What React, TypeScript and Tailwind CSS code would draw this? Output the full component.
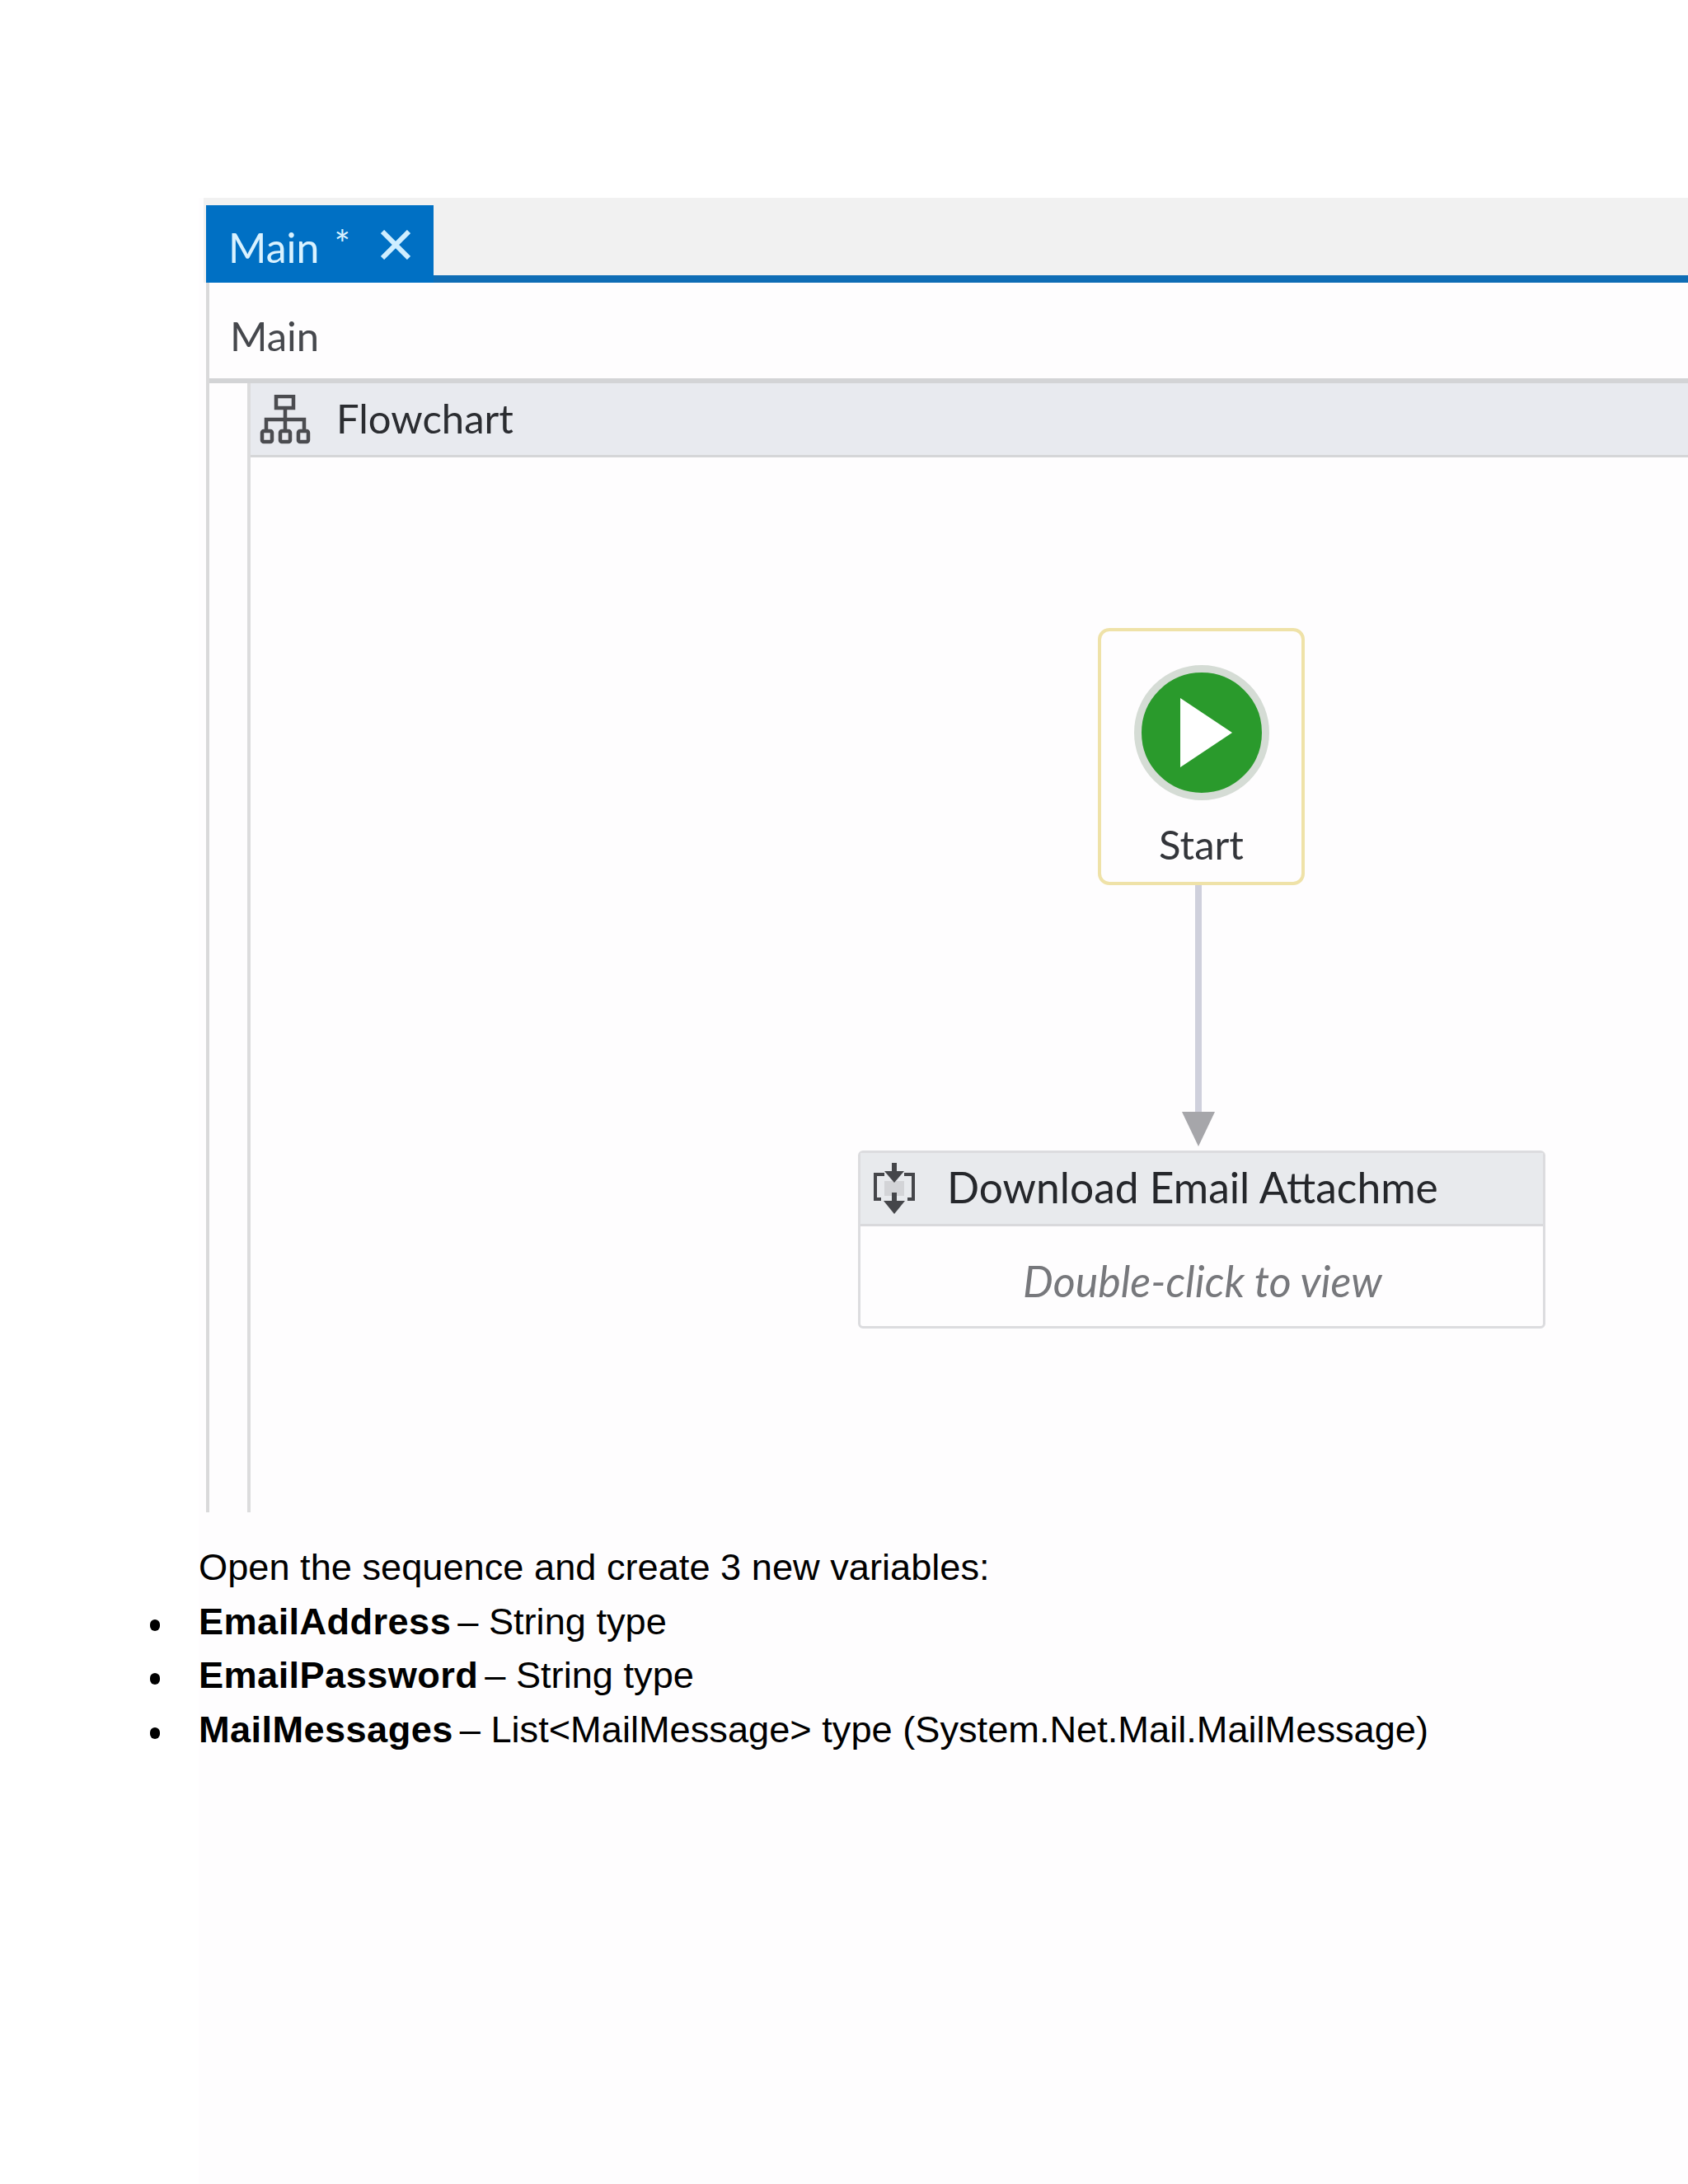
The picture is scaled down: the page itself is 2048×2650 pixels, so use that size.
export default function App() {
  const ui = { fontFamily: 'Lato, "Open Sans", sans-serif' };
  const doc = { fontFamily: '"Liberation Sans", Arial, sans-serif' };
  return (
    <div className="w-[2048px] h-[2650px] overflow-hidden bg-white pt-[240px] pl-[241px]">
      <div className="h-[2410px] bg-[#fefdfe]">
        <div className="w-[1807px] pl-[6px]" style={ui}>
          <div className="h-[103px] bg-[#f1f1f1] pl-[3px] flex flex-col justify-end">
            <div className="h-[94px] flex items-start border-b-[9px] border-[#0f6db5]">
              <div className="w-[276px] h-[94px] shrink-0 bg-[#0070c4] text-[#d9f2ff] text-[50px] leading-none flex items-start pl-[27px] pt-[26px] relative">
                <span>Main</span>
                <span className="text-[46px] ml-[18px] mt-[-2px]">*</span>
                <svg className="absolute left-[212px] top-[30px] w-[36px] h-[36px]" viewBox="0 0 36 36" fill="none" stroke="#cfeeff" strokeWidth="6">
                  <path d="M2 2 L34 34 M34 2 L2 34" />
                </svg>
              </div>
            </div>
          </div>
          <div className="h-[1492px] ml-[3px] border-l-[4px] border-[#d9d9da] flex flex-col">
            <div className="h-[122px] border-b-[6px] border-[#d3d4d6] pl-[25px] pt-[35px] text-[49px] leading-[58px] text-[#46484d]">Main</div>
            <div className="ml-[46px] flex-1 border-l-[4px] border-[#dcdcdd] flex flex-col">
              <div className="h-[90px] bg-[#e8eaef] border-b-[3px] border-[#d5d6d8] flex items-center pl-[11px] text-[49px] text-[#2b2d31]">
                <svg className="w-[62px] h-[60px] shrink-0" viewBox="0 0 62 60" fill="none" stroke="#4b4c50" strokeWidth="4.5">
                  <rect x="20" y="2" width="21" height="14" />
                  <path d="M31 16 V44 M8 44 V30 H54 V44" />
                  <rect x="3" y="44" width="12" height="13" rx="2" />
                  <rect x="25" y="44" width="12" height="13" rx="2" />
                  <rect x="47" y="44" width="12" height="13" rx="2" />
                </svg>
                <span className="ml-[31px] -mt-[2px]">Flowchart</span>
              </div>
              <div className="relative flex-1">
                <div className="absolute left-[1028px] top-[207px] w-[251px] h-[312px] rounded-[14px] border-[4px] border-[#efe2a8] flex flex-col items-center">
                  <div className="w-[164px] h-[164px] mt-[41px] rounded-full bg-[#2a9a2c] border-[9px] border-[#d5dcd5] flex items-center justify-center">
                    <svg className="w-[63px] h-[84px] ml-[12px]" viewBox="0 0 63 84"><path d="M0 0 L63 42 L0 84 Z" fill="#ffffff" /></svg>
                  </div>
                  <span className="mt-[23px] text-[49px] leading-[60px] text-[#33353a]">Start</span>
                </div>
                <div className="absolute left-[1146px] top-[519px] w-[8px] h-[280px] bg-[#cfd0dc]" />
                <svg className="absolute left-[1130px] top-[794px] w-[40px] h-[42px]" viewBox="0 0 40 42"><path d="M0 0 H40 L20 42 Z" fill="#a6a6aa" /></svg>
                <div className="absolute left-[737px] top-[841px] w-[834px] h-[216px] rounded-[6px] border-[3px] border-[#dcdcdf] flex flex-col">
                  <div className="h-[89px] bg-[#e8eaed] border-b-[3px] border-[#d9d9dc] flex items-center pl-[15px] shrink-0">
                    <svg className="w-[52px] h-[63px] shrink-0" viewBox="0 0 52 63" fill="none">
                      <path d="M14 14 H3 V44 H10 M38 14 H49 V44 H42" stroke="#45464a" strokeWidth="4" />
                      <rect x="14" y="22" width="24" height="18" fill="#d3d4d7" />
                      <path d="M26 0 V16" stroke="#45464a" strokeWidth="6" />
                      <path d="M14 10 L26 24 L38 10 Z" fill="#45464a" />
                      <path d="M26 36 V50" stroke="#45464a" strokeWidth="6" />
                      <path d="M13 46 L26 62 L39 46 Z" fill="#45464a" />
                    </svg>
                    <div className="ml-[38px] w-[596px] overflow-hidden whitespace-nowrap text-[51.5px] leading-[60px] text-[#25272b] -mt-[4px]">Download Email Attachment</div>
                  </div>
                  <div className="flex-1 flex items-center justify-center text-[52px] italic text-[#77787c] pt-[10px] pl-[2px]">Double-click to view</div>
                </div>
              </div>
            </div>
          </div>
        </div>
        <div className="mt-[34px] text-[45.2px] leading-[65.5px] text-black" style={doc}>
          <p>Open the sequence and create 3 new variables:</p>
          {[
            ["EmailAddress", "String type"],
            ["EmailPassword", "String type"],
            ["MailMessages", "List<MailMessage> type (System.Net.Mail.MailMessage)"],
          ].map(([b, t]) => (
            <div key={b} className="relative">
              <span className="absolute left-[-59px] top-[30px] w-[12px] h-[14px] rounded-full bg-black" />
              <span className="font-bold tracking-[0.4px]">{b}</span>
              <span className="ml-[8px]">– {t}</span>
            </div>
          ))}
        </div>
      </div>
    </div>
  );
}
